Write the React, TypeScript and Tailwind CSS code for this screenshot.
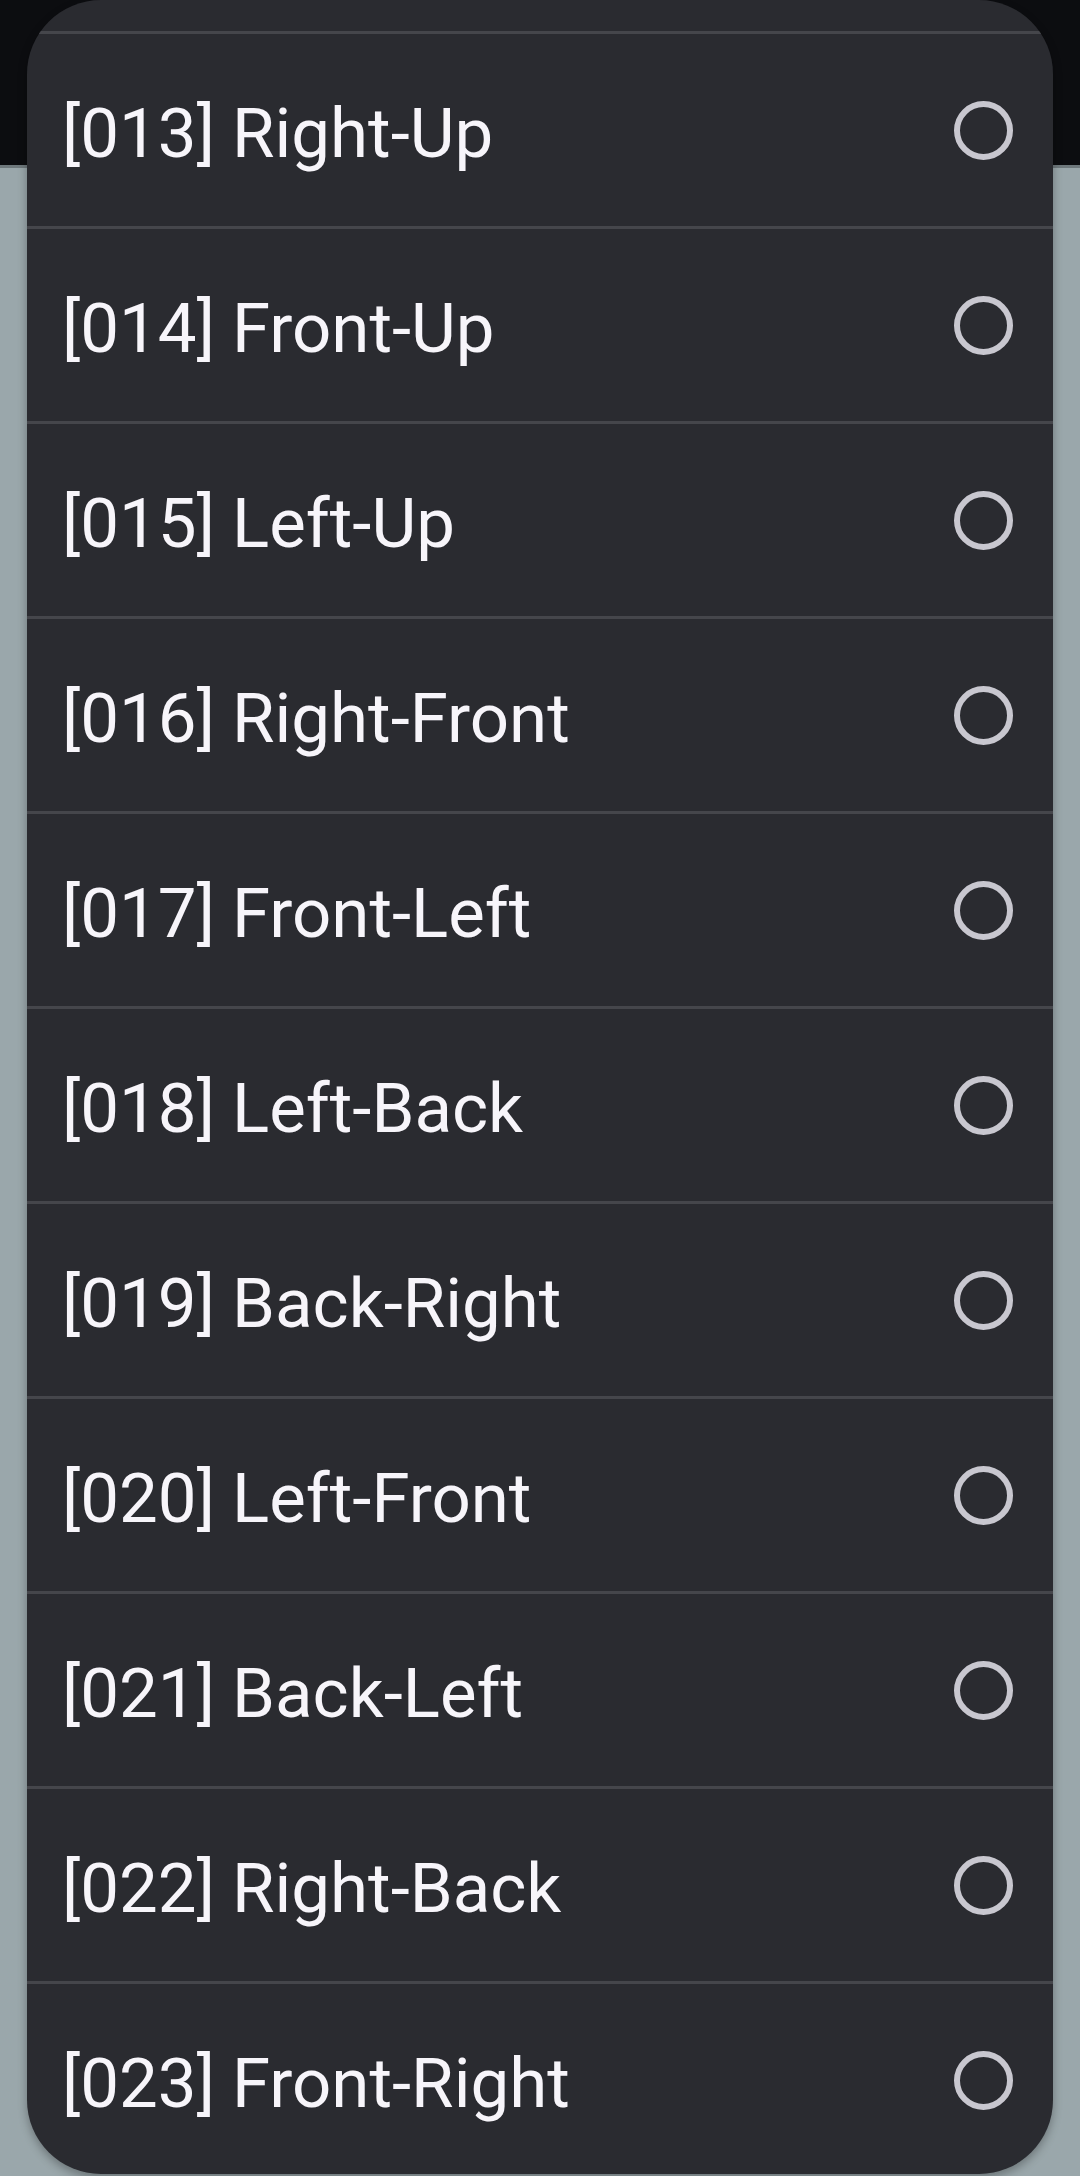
import React from 'react';

const options = [
  '[013] Right-Up',
  '[014] Front-Up',
  '[015] Left-Up',
  '[016] Right-Front',
  '[017] Front-Left',
  '[018] Left-Back',
  '[019] Back-Right',
  '[020] Left-Front',
  '[021] Back-Left',
  '[022] Right-Back',
  '[023] Front-Right',
];

const App: React.FC = () => {
  return (
    <div className="relative w-[1080px] h-[2176px] overflow-hidden bg-[#9aa7ab] font-['Roboto',sans-serif]">
      {/* Page behind the dialog */}
      <div className="h-[168px] bg-[#0c0d10] border-b-[3px] border-[#6e787c]"></div>

      {/* Dialog */}
      <div className="absolute top-0 left-[27px] right-[27px] bottom-[2px] rounded-[74px] overflow-hidden bg-[#2a2b30] shadow-[0_4px_10px_rgba(0,0,0,0.3)]">
        <div className="h-[31px]"></div>
        {options.map((label) => (
          <div
            key={label}
            className="h-[195px] border-t-[3px] border-[#45464b] flex items-center justify-between pl-[35px] pr-[40px]"
          >
            <span className="text-[69px] leading-none pt-[6px] text-[#f7f5fa]">{label}</span>
            <span className="w-[59px] h-[59px] rounded-full border-[6px] border-[#c8c7cf]"></span>
          </div>
        ))}
      </div>
    </div>
  );
};

export default App;
